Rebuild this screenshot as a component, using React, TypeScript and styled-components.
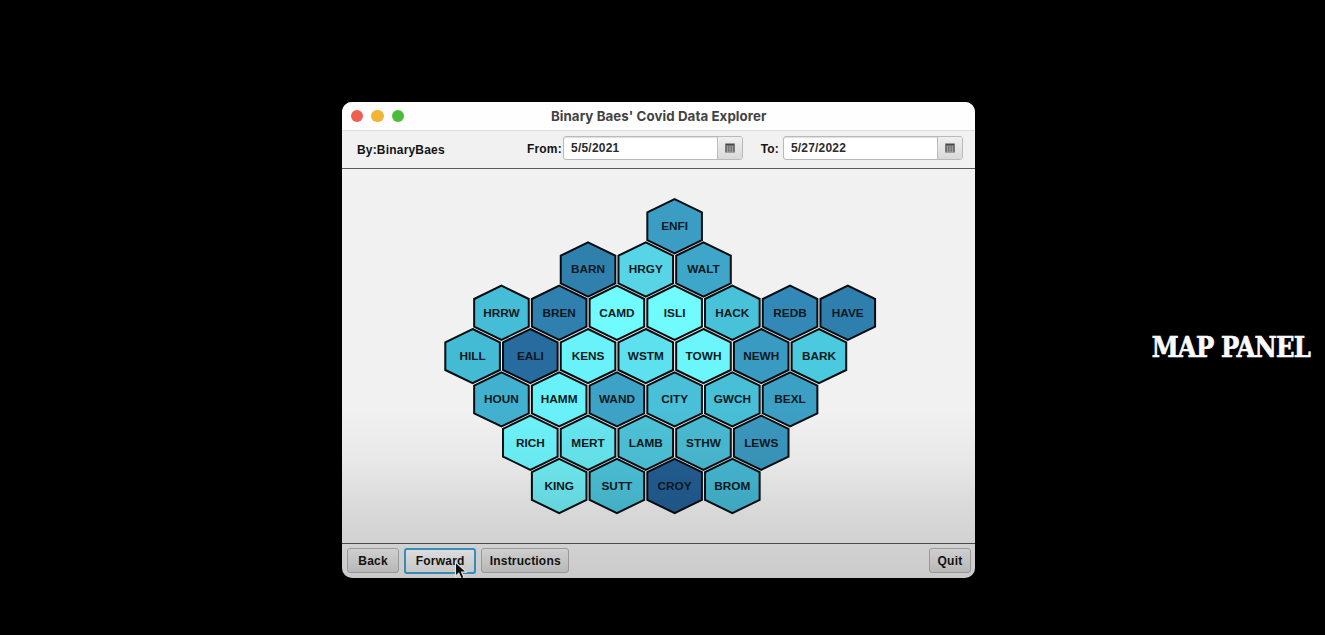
import React from "react";
import styled, { createGlobalStyle } from "styled-components";

const GlobalStyle = createGlobalStyle`
  * { box-sizing: border-box; }
  body { margin: 0; background: #000; overflow: hidden; }
`;

const Stage = styled.main`
  display: grid;
  grid-template-columns: 342.4px 632.6px 1fr;
  height: 635px;
  padding-top: 101.5px;
  background: #000;
  font-family: "Liberation Sans", Arial, sans-serif;
`;

const Window = styled.section`
  position: relative;
  grid-column: 2;
  display: flex;
  flex-direction: column;
  height: 476px;
  border-radius: 10px;
  overflow: hidden;
  background: #f1f1f1;
  color: #141414;
  font-size: 12px;
  font-weight: 700;
  letter-spacing: 0.2px;
`;

const Shade = styled.div`
  position: absolute;
  inset: 306px 0 0;
  pointer-events: none;
  background: linear-gradient(
    rgba(0, 0, 0, 0) 0%,
    rgba(0, 0, 0, 0.035) 30%,
    rgba(0, 0, 0, 0.1) 60%,
    rgba(0, 0, 0, 0.16) 100%
  );
`;

const TitleBar = styled.header`
  display: grid;
  grid-template-columns: 80px 1fr 80px;
  align-items: center;
  flex: none;
  height: 29.5px;
  background: #fefefe;
  border-bottom: 1px solid #dedede;
`;

const Lights = styled.div`
  display: flex;
  gap: 8px;
  padding: 0.6px 0 0 8.2px;
`;

const Light = styled.span<{ $color: string }>`
  width: 12.6px;
  height: 12.6px;
  border-radius: 50%;
  background: ${(p) => p.$color};
`;

const Title = styled.h1`
  margin: 0;
  font: 700 13.3px/28px Inter, sans-serif;
  letter-spacing: 0.08px;
  color: #434343;
  text-align: center;
  white-space: nowrap;
`;

const Toolbar = styled.div`
  display: flex;
  flex: none;
  height: 37.5px;
  padding: 5px 12px 0 14.5px;
  border-bottom: 1.5px solid #5c5c5c;
`;

const Author = styled.span`
  width: 170px;
  padding-top: 4px;
  line-height: 20px;
`;

const Field = styled.label<{ $gap: number }>`
  display: flex;
  margin-left: ${(p) => p.$gap}px;
  line-height: 26px;
`;

const FieldName = styled.span<{ $width: number }>`
  width: ${(p) => p.$width}px;
  white-space: nowrap;
`;

const DateBox = styled.span`
  display: flex;
  width: 180px;
  height: 24px;
  border: 1px solid #b9b9b9;
  border-radius: 3px;
  overflow: hidden;
  background: #fff;
  box-shadow: inset 0 1px 1px #ddd;
`;

const DateText = styled.span`
  flex: 1;
  padding-left: 7.2px;
  line-height: 23px;
  color: #2c2c2c;
`;

const CalendarButton = styled.span`
  display: flex;
  align-items: center;
  justify-content: center;
  width: 25px;
  border-left: 1px solid #bdbdbd;
  background: linear-gradient(#efefef, #d9d9d9);
`;

const MapArea = styled.div`
  flex: 1;
  padding: 29.2px 0 0 101.6px;
`;

const HexMap = styled.svg`
  display: block;
`;

const HexLabel = styled.text`
  font: 700 11.8px "Liberation Sans", Arial, sans-serif;
  letter-spacing: 0;
  text-anchor: middle;
  fill: #0a1820;
`;

const Footer = styled.footer`
  display: flex;
  flex: none;
  gap: 5px;
  height: 35px;
  padding: 4.5px 4px 0 4.9px;
  border-top: 1.5px solid #555;
`;

const Button = styled.button<{ $width: number; $focused?: boolean; $end?: boolean }>`
  width: ${(p) => p.$width}px;
  height: ${(p) => (p.$focused ? 26 : 25)}px;
  margin: ${(p) => (p.$focused ? "-0.5px 0 0" : "0")};
  margin-left: ${(p) => (p.$end ? "auto" : "0")};
  padding: 0;
  border: ${(p) => (p.$focused ? "2px solid #3fa4d8" : "1px solid #b3b3b3")};
  border-radius: 3px;
  background: ${(p) =>
    p.$focused ? "linear-gradient(#fff, #ececec)" : "linear-gradient(#efefef, #dadada)"};
  font: inherit;
  line-height: 22px;
  letter-spacing: inherit;
  color: inherit;
`;

const Pointer = styled.svg`
  position: absolute;
  left: 111.4px;
  top: 459.5px;
`;

const Caption = styled.aside`
  grid-column: 3;
  padding: 230.5px 15px 0 0;
  font: 700 27px/32px "DejaVu Serif Condensed", "DejaVu Serif", serif;
  letter-spacing: -0.8px;
  -webkit-text-stroke: 0.6px #fafafa;
  text-align: right;
  white-space: nowrap;
  color: #fafafa;
`;

type Borough = { name: string; color: string };

const b = (name: string, color: string): Borough => ({ name, color });

const rows: { offset: number; cells: Borough[] }[] = [
  { offset: 7, cells: [b("ENFI", "#3b9dc3")] },
  { offset: 4, cells: [b("BARN", "#3080ae"), b("HRGY", "#57d5e6"), b("WALT", "#3ea6c8")] },
  {
    offset: 1,
    cells: [
      b("HRRW", "#45bdd6"), b("BREN", "#2f80af"), b("CAMD", "#70fbff"), b("ISLI", "#70fbff"),
      b("HACK", "#47c2d9"), b("REDB", "#3289b7"), b("HAVE", "#2e7fae"),
    ],
  },
  {
    offset: 0,
    cells: [
      b("HILL", "#43bbd5"), b("EALI", "#276b9f"), b("KENS", "#69f2fa"), b("WSTM", "#5de1ef"),
      b("TOWH", "#6cf6fc"), b("NEWH", "#399bc1"), b("BARK", "#4bcadf"),
    ],
  },
  {
    offset: 1,
    cells: [
      b("HOUN", "#42b1cf"), b("HAMM", "#69f1f9"), b("WAND", "#3da3c6"), b("CITY", "#49bfd8"),
      b("GWCH", "#47bfd7"), b("BEXL", "#3c9fc4"),
    ],
  },
  {
    offset: 2,
    cells: [
      b("RICH", "#6df2f9"), b("MERT", "#66e7f0"), b("LAMB", "#4dc2d8"), b("STHW", "#49bad2"),
      b("LEWS", "#3b97bd"),
    ],
  },
  {
    offset: 3,
    cells: [b("KING", "#70edf4"), b("SUTT", "#4cc3da"), b("CROY", "#235e94"), b("BROM", "#46b9d4")],
  },
];

const COLUMN = 57.72;
const ROW = 43.3;

const BoroughMap = () => (
  <HexMap width="434" height="318" viewBox="0 0 434 318">
    {rows.map((row, r) =>
      row.cells.map((cell, c) => (
        <g
          key={cell.name}
          transform={`translate(${28.6 + (row.offset / 2 + c) * COLUMN} ${28.1 + r * ROW})`}
        >
          <path
            d="M0-27 27.3-13.7V14L0 27.2-27.3 14V-13.7z"
            fill={cell.color}
            stroke="#060c10"
            strokeWidth="2"
          />
          <HexLabel y="4">{cell.name}</HexLabel>
        </g>
      ))
    )}
  </HexMap>
);

const CalendarIcon = () => (
  <svg width="10" height="10" viewBox="0 0 10 10">
    <path d="M.3.5h9.4v9H.3z" fill="#4a4a4a" />
    <path d="M1 3.1h8M1 5h8M1 6.9h8M1 8.8h8M2.7 2.8v6.4M5 2.8v6.4M7.3 2.8v6.4" stroke="#ddd" strokeWidth=".5" />
  </svg>
);

const DateField = ({ name, value, gap, width }: { name: string; value: string; gap: number; width: number }) => (
  <Field $gap={gap}>
    <FieldName $width={width}>{name}</FieldName>
    <DateBox>
      <DateText>{value}</DateText>
      <CalendarButton>
        <CalendarIcon />
      </CalendarButton>
    </DateBox>
  </Field>
);

export default function App() {
  return (
    <Stage>
      <GlobalStyle />
      <Window>
        <TitleBar>
          <Lights>
            <Light $color="#ec6051" />
            <Light $color="#f2b532" />
            <Light $color="#4cbd3b" />
          </Lights>
          <Title>Binary Baes' Covid Data Explorer</Title>
        </TitleBar>
        <Toolbar>
          <Author>By:BinaryBaes</Author>
          <DateField name="From:" value="5/5/2021" gap={0} width={36} />
          <DateField name="To:" value="5/27/2022" gap={17.8} width={22} />
        </Toolbar>
        <MapArea>
          <BoroughMap />
        </MapArea>
        <Footer>
          <Button $width={51.6}>Back</Button>
          <Button $width={72.6} $focused>Forward</Button>
          <Button $width={87.6}>Instructions</Button>
          <Button $width={42} $end>Quit</Button>
        </Footer>
        <Shade />
        <Pointer width="14" height="20" viewBox="0 0 14 20">
          <path
            d="M1.5 1.2v14l3.3-3.1 2.5 5.8 2.7-1.2-2.4-5.6h4.7z"
            fill="#080808"
            stroke="#e2e2e2"
            strokeWidth="1.1"
          />
        </Pointer>
      </Window>
      <Caption>MAP PANEL</Caption>
    </Stage>
  );
}
